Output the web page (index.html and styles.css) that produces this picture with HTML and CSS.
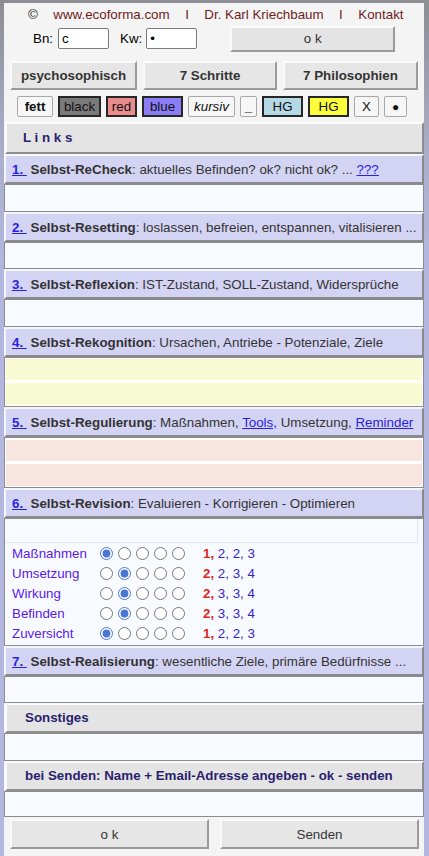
FILE: index.html
```html
<!DOCTYPE html>
<html lang="de">
<head>
<meta charset="utf-8">
<title>Selbst-Management</title>
<link rel="stylesheet" href="styles.css">
</head>
<body>
<div class="page">
  <div class="topnav">
    <span class="copy">©</span>
    <a href="#" class="tl">www.ecoforma.com</a>
    <span class="sep">I</span>
    <a href="#" class="tl">Dr. Karl Kriechbaum</a>
    <span class="sep">I</span>
    <a href="#" class="tl">Kontakt</a>
  </div>

  <div class="login">
    <label class="lbl lbl-bn">Bn:</label>
    <input class="inp" type="text" value="c">
    <label class="lbl lbl-kw">Kw:</label>
    <input class="inp" type="password" value="x">
    <button class="btn btn-ok">o k</button>
  </div>

  <div class="tabs">
    <button class="btn tab">psychosophisch</button>
    <button class="btn tab">7 Schritte</button>
    <button class="btn tab">7 Philosophien</button>
  </div>

  <div class="fmt">
    <button class="fb fb-fett">fett</button>
    <button class="fb fb-black">black</button>
    <button class="fb fb-red">red</button>
    <button class="fb fb-blue">blue</button>
    <button class="fb fb-kursiv">kursiv</button>
    <button class="fb fb-under">_</button>
    <button class="fb fb-hg1">HG</button>
    <button class="fb fb-hg2">HG</button>
    <button class="fb fb-x">X</button>
    <button class="fb fb-dot">●</button>
  </div>

  <div class="bar bar-links">L i n k s</div>

  <div class="sec-head"><a href="#" class="num">1.&nbsp;</a> <b>Selbst-ReCheck</b>: aktuelles Befinden? ok? nicht ok? ... <a href="#" class="lnk">???</a></div>
  <div class="field"></div>

  <div class="sec-head"><a href="#" class="num">2.&nbsp;</a> <b>Selbst-Resetting</b>: loslassen, befreien, entspannen, vitalisieren ...</div>
  <div class="field"></div>

  <div class="sec-head"><a href="#" class="num">3.&nbsp;</a> <b>Selbst-Reflexion</b>: IST-Zustand, SOLL-Zustand, Widersprüche</div>
  <div class="field"></div>

  <div class="sec-head"><a href="#" class="num">4.&nbsp;</a> <b>Selbst-Rekognition</b>: Ursachen, Antriebe - Potenziale, Ziele</div>
  <div class="multi multi-yellow">
    <div class="mfield"></div>
    <div class="mfield"></div>
  </div>

  <div class="sec-head"><a href="#" class="num">5.&nbsp;</a> <b>Selbst-Regulierung</b>: Maßnahmen, <a href="#" class="lnk">Tools,</a> Umsetzung, <a href="#" class="lnk">Reminder</a></div>
  <div class="multi multi-pink">
    <div class="mfield"></div>
    <div class="mfield"></div>
  </div>

  <div class="sec-head"><a href="#" class="num">6.&nbsp;</a> <b>Selbst-Revision</b>: Evaluieren - Korrigieren - Optimieren</div>
  <div class="rev-box">
    <div class="rev-field"></div>
    <div class="rates">
      <div class="rate-row">
        <span class="rate-lbl">Maßnahmen</span>
        <span class="radios"><input type="radio" name="r1" checked><input type="radio" name="r1"><input type="radio" name="r1"><input type="radio" name="r1"><input type="radio" name="r1"></span>
        <span class="rate-num"><b class="hi">1,</b> 2, 2, 3</span>
      </div>
      <div class="rate-row">
        <span class="rate-lbl">Umsetzung</span>
        <span class="radios"><input type="radio" name="r2"><input type="radio" name="r2" checked><input type="radio" name="r2"><input type="radio" name="r2"><input type="radio" name="r2"></span>
        <span class="rate-num"><b class="hi">2,</b> 2, 3, 4</span>
      </div>
      <div class="rate-row">
        <span class="rate-lbl">Wirkung</span>
        <span class="radios"><input type="radio" name="r3"><input type="radio" name="r3" checked><input type="radio" name="r3"><input type="radio" name="r3"><input type="radio" name="r3"></span>
        <span class="rate-num"><b class="hi">2,</b> 3, 3, 4</span>
      </div>
      <div class="rate-row">
        <span class="rate-lbl">Befinden</span>
        <span class="radios"><input type="radio" name="r4"><input type="radio" name="r4" checked><input type="radio" name="r4"><input type="radio" name="r4"><input type="radio" name="r4"></span>
        <span class="rate-num"><b class="hi">2,</b> 3, 3, 4</span>
      </div>
      <div class="rate-row">
        <span class="rate-lbl">Zuversicht</span>
        <span class="radios"><input type="radio" name="r5" checked><input type="radio" name="r5"><input type="radio" name="r5"><input type="radio" name="r5"><input type="radio" name="r5"></span>
        <span class="rate-num"><b class="hi">1,</b> 2, 2, 3</span>
      </div>
    </div>
  </div>

  <div class="sec-head"><a href="#" class="num">7.&nbsp;</a> <b>Selbst-Realisierung</b>: wesentliche Ziele, primäre Bedürfnisse ...</div>
  <div class="field"></div>

  <div class="bar bar-sub">Sonstiges</div>
  <div class="field"></div>

  <div class="bar bar-sub">bei Senden: Name + Email-Adresse angeben - ok - senden</div>
  <div class="field field-last"></div>

  <div class="bottom">
    <button class="btn btn-big">o k</button>
    <button class="btn btn-big">Senden</button>
  </div>
</div>
</body>
</html>
```

FILE: styles.css
```css
* { box-sizing: border-box; }

html, body { height: 100%; }

body {
  margin: 0;
  background: linear-gradient(to bottom, #8d8d93 0px, #a9acc8 140px, #b3b7df 260px, #b3b7df 100%);
  font-family: "Liberation Sans", Arial, sans-serif;
  font-size: 13.33px;
  color: #333;
}

.page {
  margin: 3px 5px 0 4px;
  width: 420px;
  height: 853px;
  background: #f4f4f4;
}

/* top navigation */
.topnav {
  height: 22px;
  display: flex;
  align-items: center;
  gap: 15.5px;
  padding-left: 24px;
  padding-top: 1px;
}
.copy { color: #222; }
.tl, .sep { color: #6e1c1c; text-decoration: none; }

/* login */
.login {
  height: 27px;
  display: flex;
  align-items: center;
  padding-left: 29px;
}
.lbl { color: #000; }
.lbl-bn { margin-right: 5px; }
.lbl-kw { margin-left: 11px; margin-right: 4px; }
.inp {
  width: 51px;
  height: 21px;
  border: 1px solid #7a7a7a;
  border-radius: 2px;
  background: #fff;
  padding: 0 3px;
  font-family: "Liberation Sans", Arial, sans-serif;
  font-size: 13.33px;
  color: #000;
}

.btn {
  background: #e4e4e4;
  border: 2px solid;
  border-color: #fafafa #9a9a9a #9a9a9a #fafafa;
  color: #333;
  font-family: "Liberation Sans", Arial, sans-serif;
  font-size: 13.33px;
  padding: 0;
}
.btn-ok {
  margin-left: 33px;
  width: 165px;
  height: 26px;
}

/* tabs */
.tabs {
  margin-top: 9px;
  display: grid;
  grid-template-columns: 127px 134px 1fr;
  gap: 6px;
  padding: 0 6px;
}
.tab {
  height: 29px;
  font-weight: bold;
  background: #e6e6e6;
}

/* format buttons */
.fmt {
  margin-top: 6px;
  display: flex;
  gap: 5px;
  padding-left: 13px;
  height: 21px;
}
.fb {
  height: 21px;
  padding: 0;
  border: 1px solid #a8a8a8;
  border-radius: 2px;
  background: #f6f6f6;
  color: #111;
  font-family: "Liberation Sans", Arial, sans-serif;
  font-size: 13.33px;
}
.fb-fett { width: 36px; font-weight: bold; }
.fb-black { width: 43px; background: #7a7a7a; border: 2px solid #262626; border-radius: 0; }
.fb-red { width: 31px; background: #ea8c8c; border: 2px solid #262626; border-radius: 0; }
.fb-blue { width: 41px; background: #8a7df5; border: 2px solid #262626; border-radius: 0; }
.fb-kursiv { width: 47px; font-style: italic; }
.fb-under { width: 17px; font-weight: bold; }
.fb-hg1 { width: 41px; background: #b4d8e6; border: 2px solid #262626; border-radius: 0; }
.fb-hg2 { width: 41px; background: #fdfd3c; border: 2px solid #262626; border-radius: 0; }
.fb-x { width: 25px; }
.fb-dot { width: 23px; font-size: 12px; }

/* bars */
.bar {
  margin-left: 1px;
  width: 419px;
  border: 2px solid;
  border-color: #fbfbfb #8e8e8e #8e8e8e #fbfbfb;
  background: #e4e4e4;
  color: #2a1f6e;
  font-weight: bold;
}
.bar-links {
  margin-top: 5px;
  height: 32px;
  line-height: 28px;
  padding-left: 16px;
}
.bar-sub {
  height: 30px;
  line-height: 26px;
  padding-left: 18px;
}

/* section headers */
.sec-head {
  height: 30px;
  border: 2px solid;
  border-color: #f6f6ff #8a8a8a #8a8a8a #f6f6ff;
  background: #d3d3f4;
  line-height: 26px;
  padding-left: 6px;
  padding-top: 1px;
  white-space: nowrap;
  overflow: hidden;
  color: #333;
}
.sec-head b { color: #333; }
.num, .lnk { color: #2b1fe0; text-decoration: underline; }
.num { font-weight: bold; }

/* fields */
.field {
  height: 27.5px;
  background: #f7fbff;
  border: 1px solid #8c8c8c;
}
.field-last { height: 26.5px; }

.multi {
  border: 1px solid #8c8c8c;
  background: #fff;
  padding: 1px 1px;
  display: flex;
  flex-direction: column;
  gap: 3px;
}
.mfield { height: 22px; }
.multi-yellow { height: 50px; }
.multi-yellow .mfield { background: #f8fad3; }
.multi-pink { height: 51px; padding-top: 2px; }
.multi-pink .mfield { background: #f8e5e0; }

/* revision box */
.rev-box {
  height: 128px;
  border: 1px solid #8c8c8c;
  background: #f7fbff;
}
.rev-field {
  height: 24px;
  width: 413px;
  border-right: 1px solid #e4e8ee;
  border-bottom: 1px solid #e4e8ee;
}
.rates { padding-top: 1px; }
.rate-row {
  height: 20px;
  display: flex;
  align-items: center;
  padding-left: 7px;
}
.rate-lbl {
  width: 88px;
  color: #5a17ee;
}
.radios { display: flex; align-items: center; }
.radios input {
  width: 13px;
  height: 13px;
  margin: 0 5px 0 0;
  accent-color: #4a76d8;
}
.rate-num {
  margin-left: 13px;
  color: #3a22c8;
}
.hi { color: #e0241e; }

/* bottom buttons */
.bottom {
  margin-top: 2px;
  display: grid;
  grid-template-columns: 199px 199px;
  gap: 11px;
  padding-left: 6px;
}
.btn-big {
  height: 30px;
  background: #e6e6e6;
}
```
